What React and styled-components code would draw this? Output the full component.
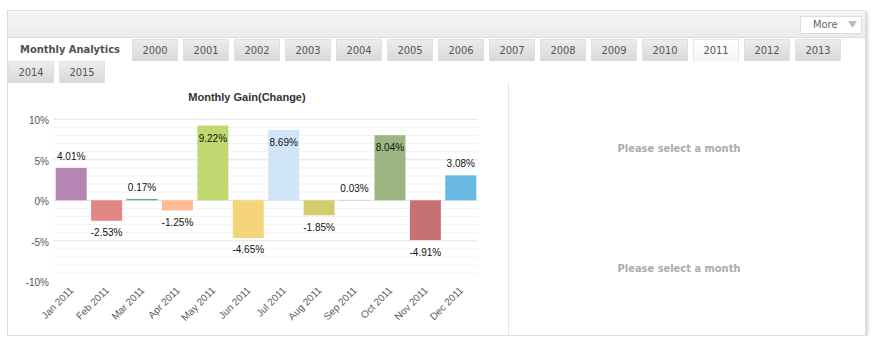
import React from 'react';
import styled, { createGlobalStyle } from 'styled-components';

const GlobalStyle = createGlobalStyle`
    html, body {
        margin: 0;
        padding: 0;
        background: #fff;
    }
    body {
        font-family: "DejaVu Sans Condensed", "DejaVu Sans", "Liberation Sans", sans-serif;
        font-stretch: condensed;
    }
`;

const Panel = styled.div`
    margin: 10px 0 0 7px;
    width: 857px;
    border: 1px solid #dcdcdc;
    border-top-color: #e2e2e2;
    background: #fff;
    box-shadow: 2px 2px 3px rgba(0, 0, 0, 0.16);
`;

const Header = styled.div`
    height: 26px;
    display: flex;
    align-items: center;
    justify-content: flex-end;
    padding: 0 3px;
    background: linear-gradient(#f6f6f6, #ebebeb);
    border-bottom: 1px solid #dddddd;
`;

const MoreButton = styled.button`
    display: flex;
    align-items: center;
    justify-content: space-between;
    width: 62px;
    height: 18px;
    margin-top: 1px;
    padding: 0 4px 0 12px;
    box-sizing: border-box;
    background: #fff;
    border: 1px solid #dedede;
    font-family: inherit;
    font-size: 11px;
    color: #666;
    cursor: pointer;
    svg {
        display: block;
    }
`;

const TabStrip = styled.div`
    display: flex;
    flex-wrap: wrap;
    padding-top: 1px;
`;

const TitleTab = styled.div`
    width: 124px;
    height: 22px;
    line-height: 22px;
    text-align: center;
    font-size: 11px;
    font-weight: 700;
    color: #505058;
    background: #fff;
`;

const YearTab = styled.div`
    width: 46px;
    height: 22px;
    line-height: 22px;
    margin-right: 5px;
    box-sizing: border-box;
    text-align: center;
    font-size: 11px;
    color: #555560;
    border: 1px solid ${p => (p.$active ? '#e6e6e6' : '#e0e0e0')};
    border-bottom: none;
    background: ${p => (p.$active ? 'linear-gradient(#ffffff, #f4f4f4)' : 'linear-gradient(#ececec, #d8d8d8)')};
    cursor: pointer;
`;

const Content = styled.div`
    display: flex;
    height: 252px;
`;

const ChartPane = styled.div`
    width: 500px;
    border-right: 1px solid #e6e6e6;
    svg {
        display: block;
    }
`;

const DetailPane = styled.div`
    flex: 1;
    display: flex;
    flex-direction: column;
    padding: 5px 16px 0 0;
`;

const Placeholder = styled.div`
    height: 120px;
    display: flex;
    align-items: center;
    justify-content: center;
    font-size: 11px;
    font-weight: 700;
    color: #ababab;
`;

const months = [
    { m: 'Jan', v: 4.01, c: '#b586b4' },
    { m: 'Feb', v: -2.53, c: '#e18785' },
    { m: 'Mar', v: 0.17, c: '#5fa8a0' },
    { m: 'Apr', v: -1.25, c: '#fdbc94' },
    { m: 'May', v: 9.22, c: '#c0d86f' },
    { m: 'Jun', v: -4.65, c: '#f5d57a' },
    { m: 'Jul', v: 8.69, c: '#d0e6f8' },
    { m: 'Aug', v: -1.85, c: '#d1cd6f' },
    { m: 'Sep', v: 0.03, c: '#9cb581' },
    { m: 'Oct', v: 8.04, c: '#9cb581' },
    { m: 'Nov', v: -4.91, c: '#c67072' },
    { m: 'Dec', v: 3.08, c: '#69b9e2' },
];

const years = Array.from({ length: 16 }, (_, i) => 2000 + i);

const X0 = 45;
const X1 = 470;
const ZERO = 117.3;
const SCALE = 8.1;
const SLOT = (X1 - X0) / 12;

const GainChart = () => {
    const lines = [];
    for (let p = 10; p >= -9; p--) {
        const y = ZERO - p * SCALE;
        lines.push(
            <line key={p} x1={X0} x2={X1} y1={y} y2={y} stroke={p % 5 === 0 ? '#e4e4e4' : '#f3f3f3'} strokeWidth="1" />
        );
    }
    return (
        <svg width="500" height="252" fontFamily='"Liberation Sans", Arial, sans-serif'>
            <text x="239" y="18" textAnchor="middle" fontSize="11" fontWeight="700" fill="#333">
                Monthly Gain(Change)
            </text>
            {lines}
            {[10, 5, 0, -5, -10].map(p => (
                <text key={p} x="41" y={ZERO - p * SCALE + 5} textAnchor="end" fontSize="10" fill="#555">
                    {p}%
                </text>
            ))}
            {months.map((d, i) => {
                const x = X0 + i * SLOT + 2.7;
                const cx = x + 15.5;
                const h = Math.abs(d.v) * SCALE;
                const top = d.v >= 0 ? ZERO - h : ZERO;
                let ly;
                if (d.v >= 0) ly = d.v > 7 ? top + 16 : top - 8;
                else ly = ZERO + h + 15.5;
                return (
                    <g key={d.m}>
                        <rect x={x} y={top} width="31" height={Math.max(h, 0.01)} fill={d.c} />
                        <text x={cx} y={ly} textAnchor="middle" fontSize="10" fill="#111">
                            {d.v.toFixed(2)}%
                        </text>
                        <text
                            x={cx + 3}
                            y="208"
                            textAnchor="end"
                            fontSize="10"
                            fill="#5a5a66"
                            transform={`rotate(-45 ${cx + 3} 208)`}
                        >
                            {d.m} 2011
                        </text>
                    </g>
                );
            })}
        </svg>
    );
};

const App = () => {
    return (
        <>
            <GlobalStyle />
            <Panel>
                <Header>
                    <MoreButton>
                        More
                        <svg width="9" height="7" viewBox="0 0 9 7">
                            <polygon points="0,0 9,0 4.5,7" fill="#bcbcbc" />
                        </svg>
                    </MoreButton>
                </Header>
                <TabStrip>
                    <TitleTab>Monthly Analytics</TitleTab>
                    {years.map(y => (
                        <YearTab key={y} $active={y === 2011}>
                            {y}
                        </YearTab>
                    ))}
                </TabStrip>
                <Content>
                    <ChartPane>
                        <GainChart />
                    </ChartPane>
                    <DetailPane>
                        <Placeholder>Please select a month</Placeholder>
                        <Placeholder>Please select a month</Placeholder>
                    </DetailPane>
                </Content>
            </Panel>
        </>
    );
};

export default App;
